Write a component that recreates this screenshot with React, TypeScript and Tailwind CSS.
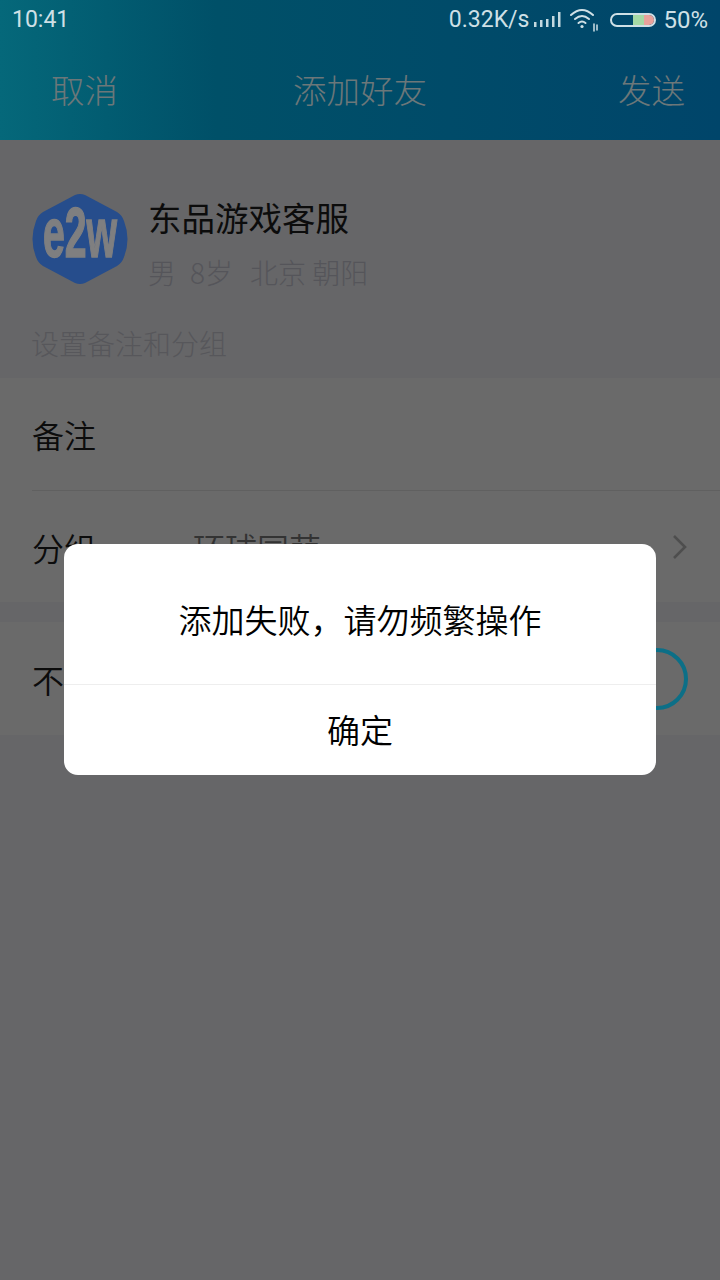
import React from "react";

const font = { fontFamily: '"Noto Sans CJK SC", sans-serif' };

function Logo() {
  return (
    <svg width="96" height="90" viewBox="0 0 96 90" className="shrink-0">
      <path d="M43 1 Q48 -1 53 1 L85 18 Q90 21 92 27 Q99 45 92 63 Q90 69 85 72 L53 89 Q48 91 43 89 L11 72 Q6 69 4 63 Q-3 45 4 27 Q6 21 11 18 Z" fill="#264d8c" />
      <text transform="translate(48 63) scale(0.7 1.25)" textAnchor="middle" fill="#7f7f80" stroke="#7f7f80" strokeWidth="1.2" fontFamily="'Liberation Sans', sans-serif" fontWeight="700" fontSize="56">e2w</text>
    </svg>
  );
}

function Signal() {
  return (
    <svg width="28" height="18" viewBox="0 0 28 18" fill="#c4d9e0">
      <rect x="1" y="11" width="2.5" height="5" />
      <rect x="7" y="9" width="2.5" height="7" />
      <rect x="13" y="8" width="2.5" height="8" />
      <rect x="19" y="5" width="2.5" height="11" />
      <rect x="25" y="1" width="2.5" height="15" />
    </svg>
  );
}

function Wifi() {
  return (
    <svg width="30" height="24" viewBox="0 0 30 24" fill="none" stroke="#cfe0e6" strokeWidth="2" strokeLinecap="round">
      <path d="M1 7 Q12 -3 23 7" />
      <path d="M5 11 Q12 5 19 11" />
      <path d="M8.5 15 Q12 12 15.5 15" />
      <circle cx="12" cy="18.5" r="1.6" fill="#cfe0e6" stroke="none" />
      <path d="M24 16 V23 M27 17 V22" strokeWidth="1.5" />
    </svg>
  );
}

function Battery() {
  return (
    <div className="flex h-[14px] w-[46px] overflow-hidden rounded-full border-2 border-[#cfe0e6]">
      <div className="w-[50%]" />
      <div className="w-[25%] bg-[#a5d9a5]" />
      <div className="w-[25%] bg-[#e8a29c]" />
    </div>
  );
}

export default function App() {
  return (
    <div className="relative h-[1280px] w-[720px] overflow-hidden bg-[#666668]" style={font}>
      <header className="h-[140px] bg-gradient-to-r from-[#05687a] via-[#005068] via-[30%] to-[#00456a]">
        <div className="flex h-[40px] items-center justify-between px-[12px] font-['Roboto'] text-[23px] text-[#cfe0e6]">
          <span>10:41</span>
          <div className="flex items-center">
            <span>0.32K/s</span>
            <span className="ml-[4px] flex"><Signal /></span>
            <span className="ml-[9px] flex"><Wifi /></span>
            <span className="ml-[10px] flex"><Battery /></span>
            <span className="ml-[7px] text-[24px]">50%</span>
          </div>
        </div>
        <div className="flex h-[100px] items-center justify-between px-[35px] pb-[2px] text-[33.5px] font-light text-[#6c7779]">
          <span className="w-[120px] pl-[16px]">取消</span>
          <span>添加好友</span>
          <span className="w-[120px] text-right">发送</span>
        </div>
      </header>

      <section className="flex h-[148px] items-start gap-[20px] pt-[54px] pl-[32px]">
        <Logo />
        <div>
          <div className="mt-[1px] text-[33.5px] leading-[44px] text-[#0c0c0c]">东品游戏客服</div>
          <div className="mt-[14px] flex text-[28px] leading-[38px] font-light text-[#55555a]">
            <span>男</span>
            <span className="ml-[14px]">8岁</span>
            <span className="ml-[17px]">北京 朝阳</span>
          </div>
        </div>
      </section>

      <div className="h-[90px] pt-[36px] pl-[31px] text-[28px] leading-[38px] font-light text-[#57575b]">设置备注和分组</div>

      <div className="bg-[#6a6a6a] text-[#0c0c0c]">
        <div className="pl-[32px]">
          <div className="flex h-[113px] items-center border-b border-[#606060] text-[32px] font-[350]">备注</div>
        </div>
        <div className="flex h-[111px] items-center px-[32px] text-[32px] font-[350]">
          <span className="w-[161px]">分组</span>
          <span className="flex-1 text-[#333333]">环球同萌</span>
          <svg width="16" height="26" viewBox="0 0 16 26" fill="none" stroke="#4e4e4e" strokeWidth="2.6">
            <path d="M2 2 L13 13 L2 24" />
          </svg>
        </div>
      </div>

      <div className="mt-[20px] flex h-[113px] items-center justify-between bg-[#6a6a6a] px-[32px] text-[32px] font-[350] text-[#0c0c0c]">
        <span>不让他看我的动态</span>
        <div className="h-[62px] w-[62px] rounded-full border-[4px] border-[#0c6f87]" />
      </div>

      <div className="absolute top-[544px] left-[64px] w-[592px] overflow-hidden rounded-[14px] bg-white text-black">
        <div className="flex h-[141px] items-center justify-center border-b border-[#eeeeee] pt-[12px] text-[33px] font-[350]">
          添加失败，请勿频繁操作
        </div>
        <div className="flex h-[90px] items-center justify-center text-[33px] font-[350]">确定</div>
      </div>
    </div>
  );
}
